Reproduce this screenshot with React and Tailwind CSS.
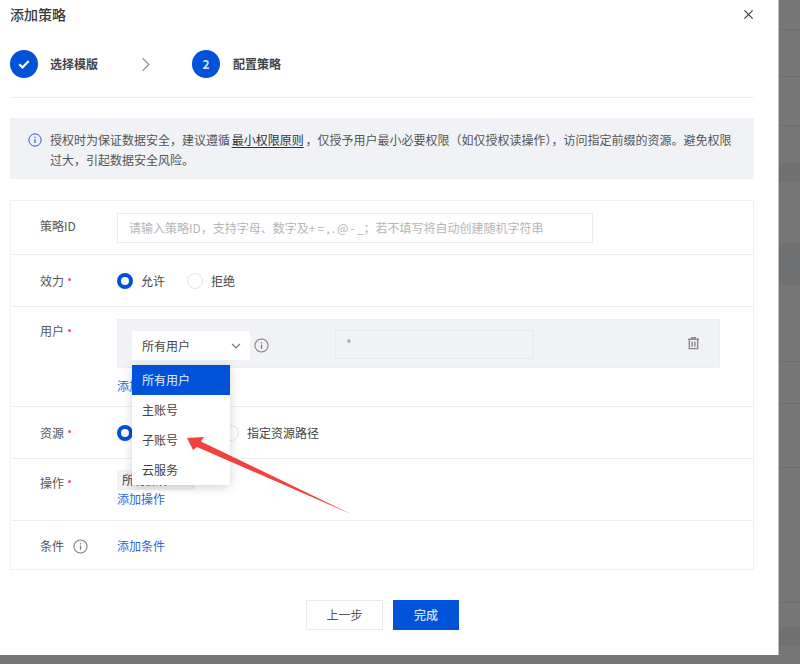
import React from "react";

function InfoIcon({ className, color = "#6b6b6b" }) {
  return (
    <svg viewBox="0 0 16 16" className={className} fill="none" stroke={color} strokeWidth="1.1">
      <circle cx="8" cy="8" r="7" />
      <path d="M8 7v4.5" strokeWidth="1.3" />
      <path d="M8 4.4v1.4" strokeWidth="1.3" />
    </svg>
  );
}

function Radio({ checked }) {
  return checked ? (
    <span className="block w-4 h-4 shrink-0 rounded-full border-[4px] border-[#0052d9] bg-white" />
  ) : (
    <span className="block w-4 h-4 shrink-0 rounded-full border border-[#e3e5ec] bg-white" />
  );
}

function Label({ children, required, extra }) {
  return (
    <div className="w-[106px] shrink-0 pl-[29px] flex items-center text-xs text-[#555] leading-5">
      <span>{children}</span>
      {required && <span className="ml-[4px] mt-[-2px] w-[3px] h-[3px] rounded-full bg-[#f0566a]" />}
      {extra}
    </div>
  );
}

const Link = ({ children }) => (
  <div className="text-xs leading-4 text-[#2a66d9]">{children}</div>
);

export default function App() {
  return (
    <div className="w-[800px] h-[664px] overflow-hidden bg-[#767676] flex font-['Noto_Sans_CJK_SC','Noto_Sans',sans-serif]">
      <div className="relative w-[779px] h-[655px] shrink-0 bg-white pl-[10px] pr-[24px] border-r border-[#bdbdbd]">
        <div className="h-[30px] pb-[2px] flex items-center justify-between">
          <span className="text-sm font-medium leading-5 text-[#3a3a3a]">添加策略</span>
          <svg viewBox="0 0 12 12" className="w-[11px] h-[11px]" fill="none" stroke="#3c3c3c" strokeWidth="1.3">
            <path d="M1.5 1.5l9 9M10.5 1.5l-9 9" />
          </svg>
        </div>

        <div className="h-[68px] pt-[20px] border-b border-[#eeeeee]">
          <div className="flex items-center h-[28px]">
            <span className="w-7 h-7 rounded-full bg-[#0052d9] flex items-center justify-center">
              <svg viewBox="0 0 14 14" className="w-[14px] h-[14px]" fill="none" stroke="#fff" strokeWidth="2.2">
                <path d="M2.2 7.2l3.3 3.2 6.2-6.4" />
              </svg>
            </span>
            <span className="ml-3 text-xs font-semibold text-[#444] w-[48px] whitespace-nowrap">选择模版</span>
            <svg viewBox="0 0 10 16" className="ml-[43px] w-[10px] h-[15px]" fill="none" stroke="#8a8a8a" strokeWidth="1.4">
              <path d="M1.5 1.5l6.5 6.5-6.5 6.5" />
            </svg>
            <span className="ml-[41px] w-7 h-7 rounded-full bg-[#0052d9] flex items-center justify-center text-xs font-semibold text-[#d6e3fb]">2</span>
            <span className="ml-[13px] text-xs font-semibold text-[#444] whitespace-nowrap">配置策略</span>
          </div>
        </div>

        <div className="mt-[20px] h-[61px] bg-[#f1f2f6] pl-[18px] pr-[10px] pt-[12px] flex">
          <InfoIcon className="w-[14px] h-[14px] mt-[3px] shrink-0" color="#1f56c8" />
          <div className="ml-[8px] text-xs leading-[20px] text-[#555] [word-spacing:-1px]">
            <div className="whitespace-nowrap">
              授权时为保证数据安全，建议遵循 <span className="underline underline-offset-2 text-[#333]">最小权限原则</span> ，仅授予用户最小必要权限（如仅授权读操作），访问指定前缀的资源。避免权限
            </div>
            <div>过大，引起数据安全风险。</div>
          </div>
        </div>

        <div className="mt-[21px] h-[370px] border border-[#eef0f5] flex flex-col">
          <div className="h-[54px] flex items-center border-b border-[#eceef3]">
            <div className="mb-[3px]"><Label>策略ID</Label></div>
            <div className="w-[476px] h-[30px] border border-[#e8eaf1] pl-[11px] flex items-center text-xs text-[#b5b5b5] whitespace-nowrap [word-spacing:-0.6px]">
              请输入策略ID，支持字母、数字及+ = , . @ - _；若不填写将自动创建随机字符串
            </div>
          </div>

          <div className="h-[52px] flex items-center border-b border-[#eceef3]">
            <Label required>效力</Label>
            <Radio checked />
            <span className="ml-2 text-xs text-[#444]">允许</span>
            <span className="ml-[22px]"><Radio /></span>
            <span className="ml-2 text-xs text-[#444]">拒绝</span>
          </div>

          <div className="h-[100px] flex border-b border-[#eceef3] pt-[14px]">
            <div className="h-[20px] flex items-start"><Label required>用户</Label></div>
            <div className="-mt-[2px]">
              <div className="w-[603px] h-[49px] bg-[#f1f2f6] border border-[#eceef3] pl-[14px] pr-[19px] pt-[11px] flex items-start">
                <div className="relative w-[118px] h-[29px] bg-white pl-[10px] pr-[8px] flex items-center justify-between text-xs text-[#444]">
                  <span>所有用户</span>
                  <svg viewBox="0 0 12 12" className="w-3 h-3" fill="none" stroke="#777" strokeWidth="1.2">
                    <path d="M2 4l4 4 4-4" />
                  </svg>
                  <div className="absolute left-0 top-[34px] z-10 w-[98px] bg-white shadow-[0_2px_10px_rgba(0,0,0,0.18)] text-xs">
                    <div className="h-[30px] bg-[#0052d9] text-[#e6eeff] pl-[10px] flex items-center">所有用户</div>
                    <div className="h-[30px] text-[#444] pl-[10px] flex items-center">主账号</div>
                    <div className="h-[30px] text-[#444] pl-[10px] flex items-center">子账号</div>
                    <div className="h-[30px] text-[#444] pl-[10px] flex items-center">云服务</div>
                  </div>
                </div>
                <InfoIcon className="ml-[4px] mt-[7px] w-[15px] h-[15px] shrink-0" color="#7c7c7c" />
                <div className="ml-[66px] w-[199px] h-[29px] -mt-[1px] border border-[#e6e8ee] pl-[10px] pt-[5px] text-xs leading-4 text-[#999]">*</div>
                <svg viewBox="0 0 14 14" className="ml-auto mt-[5px] w-[13px] h-[14px]" fill="none" stroke="#8a8a8a" strokeWidth="1.5">
                  <path d="M1 3h12M5 3V1.2h4V3M2.5 3v10h9V3M5.5 5.5v5.5M8.5 5.5v5.5" />
                </svg>
              </div>
              <div className="mt-[10px]"><Link>添加用户</Link></div>
            </div>
          </div>

          <div className="h-[52px] flex items-center border-b border-[#eceef3]">
            <Label required>资源</Label>
            <Radio checked />
            <span className="ml-2 text-xs text-[#444] w-[82px]">所有资源</span>
            <Radio />
            <span className="ml-2 text-xs text-[#444]">指定资源路径</span>
          </div>

          <div className="h-[62px] flex border-b border-[#eceef3] pt-[11px]">
            <div className="h-[25px] flex items-center"><Label required>操作</Label></div>
            <div className="flex flex-col items-start">
              <div className="w-[78px] h-[20px] bg-[#f1f2f6] pl-[5px] flex items-center text-xs text-[#444]">
                所有操作
                <svg viewBox="0 0 12 12" className="ml-[3px] w-[10px] h-[10px]" fill="none" stroke="#777" strokeWidth="1.3"><path d="M2 2l8 8M10 2l-8 8" /></svg>
              </div>
              <div className="mt-[1px]"><Link>添加操作</Link></div>
            </div>
          </div>

          <div className="flex-1 pt-[2px] flex items-center">
            <Label extra={<InfoIcon className="ml-[9px] w-[15px] h-[15px]" color="#7c7c7c" />}>条件</Label>
            <Link>添加条件</Link>
          </div>
        </div>

        <div className="mt-[30px] pl-[1px] flex justify-center gap-[10px]">
          <div className="w-[77px] h-[30px] border border-[#e8eaf1] flex items-center justify-center text-xs text-[#555]">上一步</div>
          <div className="w-[66px] h-[30px] bg-[#0052d9] flex items-center justify-center text-xs font-medium text-[#d6e3fb]">完成</div>
        </div>

        <svg className="absolute left-0 top-0 z-20 pointer-events-none" width="779" height="655" viewBox="0 0 779 655">
          <polygon points="187,438 204,437 201,441.5 352,514.5 197,447 193,450" fill="#f0433f" />
        </svg>
      </div>

      <div className="flex-1 flex flex-col">
        <div className="h-[30px] border-b border-[#6d6d6d]" />
        <div className="h-[47px] border-b border-[#6d6d6d]" />
        <div className="h-[49px] border-b border-[#6d6d6d]" />
        <div className="h-[37px]" />
        <div className="h-[19px] bg-[#6e7072]" />
        <div className="h-[61px]" />
        <div className="h-[42px] bg-[#6e7072]" />
        <div className="h-[77px] border-b border-[#6d6d6d]" />
        <div className="h-[42px] border-b border-[#6d6d6d]" />
        <div className="h-[64px] border-b border-[#6d6d6d]" />
        <div className="h-[135px] border-b border-[#6d6d6d]" />
        <div className="h-[24px]" />
        <div className="h-[19px] bg-[#6e7072]" />
      </div>
    </div>
  );
}
